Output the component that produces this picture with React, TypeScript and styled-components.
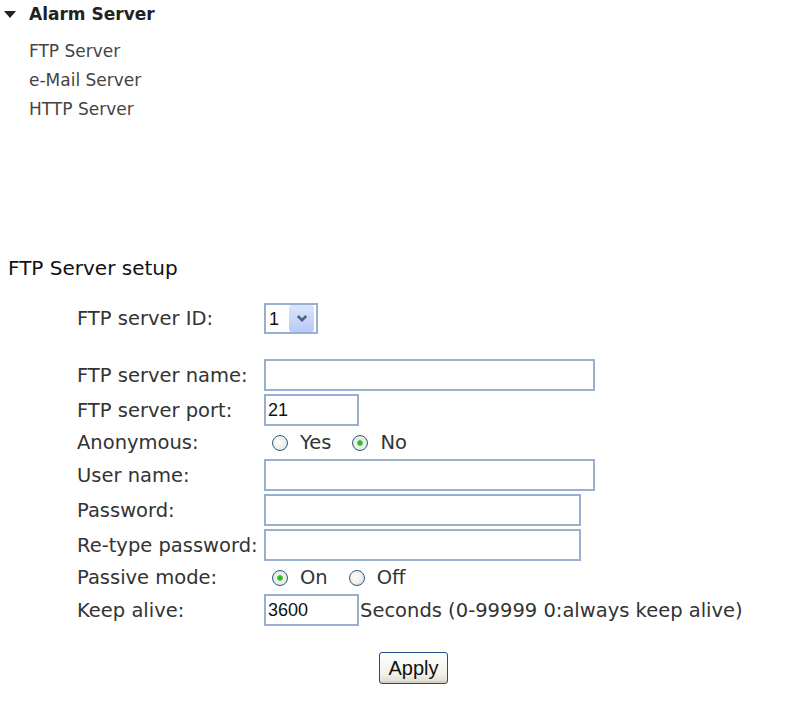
import React from "react";
import styled, { createGlobalStyle } from "styled-components";

const Global = createGlobalStyle`
  html, body { margin: 0; padding: 0; background: #ffffff; }
  body { font-family: "DejaVu Sans", Verdana, sans-serif; color: #222; }
`;

const Page = styled.div`
  width: 809px;
  height: 702px;
  display: flex;
  flex-direction: column;
`;

const Menu = styled.div`
  padding: 5px 0 0 4px;
  display: flex;
  flex-direction: column;
  height: 256px;
  box-sizing: border-box;
`;

const MenuHead = styled.div`
  display: flex;
  align-items: center;
  gap: 13px;
  height: 18px;
  font-size: 17px;
  font-weight: bold;
  color: #222;
`;

const Triangle = styled.span`
  width: 0;
  height: 0;
  border-left: 6px solid transparent;
  border-right: 6px solid transparent;
  border-top: 7px solid #222;
`;

const MenuList = styled.div`
  display: flex;
  flex-direction: column;
  padding: 14px 0 0 25px;
`;

const MenuItem = styled.div`
  height: 29px;
  line-height: 29px;
  font-size: 17px;
  color: #444;
`;

const Title = styled.div`
  padding-left: 8px;
  font-size: 20px;
  color: #111;
  height: 47px;
  line-height: 24px;
`;

const Form = styled.div`
  display: grid;
  grid-template-columns: 187px 1fr;
  row-gap: 3px;
  padding-left: 77px;
  align-items: center;
`;

const Label = styled.div<{ $h: number }>`
  height: ${(p) => p.$h}px;
  display: flex;
  align-items: center;
  font-size: 19.5px;
  color: #333;
  white-space: nowrap;
`;

const Cell = styled.div<{ $h: number }>`
  height: ${(p) => p.$h}px;
  display: flex;
  align-items: center;
`;

const Spacer = styled.div`
  grid-column: 1 / span 2;
  height: 19px;
`;

const TextBox = styled.input<{ $w: number }>`
  box-sizing: border-box;
  width: ${(p) => p.$w}px;
  height: 32px;
  border: 2px solid #98b0cd;
  margin: 0;
  padding: 0 2px;
  font-family: "Liberation Sans", Arial, sans-serif;
  font-size: 18px;
  color: #111;
  background: #fff;
  outline: none;
`;

const SelectWrap = styled.div`
  position: relative;
  box-sizing: border-box;
  width: 54px;
  height: 31px;
  border: 2px solid #98b0cd;
  background: #fff;
`;

const Select = styled.select`
  appearance: none;
  -webkit-appearance: none;
  border: none;
  background: transparent;
  width: 100%;
  height: 100%;
  padding: 0 0 0 3px;
  margin: 0;
  font-family: "Liberation Sans", Arial, sans-serif;
  font-size: 18px;
  color: #111;
  outline: none;
`;

const DropBtn = styled.span`
  position: absolute;
  top: 0;
  right: 2px;
  width: 25px;
  height: 27px;
  border-radius: 3px;
  background: linear-gradient(#dbe5fd, #b6c9f6);
  display: flex;
  align-items: center;
  justify-content: center;
  pointer-events: none;
`;

const RadioGroup = styled.div`
  display: flex;
  align-items: center;
  padding-left: 8px;
`;

const RadioLabel = styled.label`
  display: flex;
  align-items: center;
  font-size: 19.5px;
  color: #333;
  margin-right: 21px;
`;

const Radio = styled.input`
  appearance: none;
  -webkit-appearance: none;
  box-sizing: border-box;
  width: 16px;
  height: 16px;
  margin: 0 12px 0 0;
  border: 1.5px solid #2d5a86;
  border-radius: 50%;
  background: radial-gradient(circle at 40% 40%, #ffffff 0%, #ecece6 60%, #d0d0c8 100%);
  &:checked {
    background: radial-gradient(circle, #22a826 0, #3fcc3f 2.5px, #f4f4f0 3.4px, #e8e8e2 65%, #d0d0c8 100%);
  }
`;

const Note = styled.span`
  font-size: 19.5px;
  color: #333;
  margin-left: 1px;
  white-space: nowrap;
`;

const ButtonRow = styled.div`
  display: flex;
  justify-content: center;
  padding: 26px 0 0 18px;
  width: 809px;
  box-sizing: border-box;
`;

const Button = styled.button`
  box-sizing: border-box;
  width: 69px;
  height: 32px;
  border: 1px solid #1f4f82;
  border-radius: 3px;
  background: linear-gradient(#ffffff, #f2f1ea 70%, #dcdad0);
  font-family: "Liberation Sans", Arial, sans-serif;
  font-size: 20px;
  color: #111;
  padding: 0;
  box-shadow: inset 0 -2px 0 #d6d0c0;
`;

export default function App() {
  return (
    <Page>
      <Global />
      <Menu>
        <MenuHead>
          <Triangle />
          Alarm Server
        </MenuHead>
        <MenuList>
          <MenuItem>FTP Server</MenuItem>
          <MenuItem>e-Mail Server</MenuItem>
          <MenuItem>HTTP Server</MenuItem>
        </MenuList>
      </Menu>
      <Title>FTP Server setup</Title>
      <Form>
        <Label $h={31}>FTP server ID:</Label>
        <Cell $h={31}>
          <SelectWrap>
            <Select defaultValue="1">
              <option value="1">1</option>
              <option value="2">2</option>
            </Select>
            <DropBtn>
              <svg width="12" height="9" viewBox="0 0 12 9">
                <path d="M1.8 2 L6 6.2 L10.2 2" fill="none" stroke="#4d6185" strokeWidth="2.6" />
              </svg>
            </DropBtn>
          </SelectWrap>
        </Cell>
        <Spacer />
        <Label $h={32}>FTP server name:</Label>
        <Cell $h={32}>
          <TextBox $w={331} defaultValue="" />
        </Cell>
        <Label $h={32}>FTP server port:</Label>
        <Cell $h={32}>
          <TextBox $w={95} defaultValue="21" />
        </Cell>
        <Label $h={27}>Anonymous:</Label>
        <Cell $h={27}>
          <RadioGroup>
            <RadioLabel>
              <Radio type="radio" name="anon" />
              Yes
            </RadioLabel>
            <RadioLabel>
              <Radio type="radio" name="anon" defaultChecked />
              No
            </RadioLabel>
          </RadioGroup>
        </Cell>
        <Label $h={32}>User name:</Label>
        <Cell $h={32}>
          <TextBox $w={331} defaultValue="" />
        </Cell>
        <Label $h={32}>Password:</Label>
        <Cell $h={32}>
          <TextBox $w={317} type="password" defaultValue="" />
        </Cell>
        <Label $h={32}>Re-type password:</Label>
        <Cell $h={32}>
          <TextBox $w={317} type="password" defaultValue="" />
        </Cell>
        <Label $h={27}>Passive mode:</Label>
        <Cell $h={27}>
          <RadioGroup>
            <RadioLabel>
              <Radio type="radio" name="passive" defaultChecked />
              On
            </RadioLabel>
            <RadioLabel>
              <Radio type="radio" name="passive" />
              Off
            </RadioLabel>
          </RadioGroup>
        </Cell>
        <Label $h={32}>Keep alive:</Label>
        <Cell $h={32}>
          <TextBox $w={95} defaultValue="3600" />
          <Note>Seconds (0-99999 0:always keep alive)</Note>
        </Cell>
      </Form>
      <ButtonRow>
        <Button>Apply</Button>
      </ButtonRow>
    </Page>
  );
}
